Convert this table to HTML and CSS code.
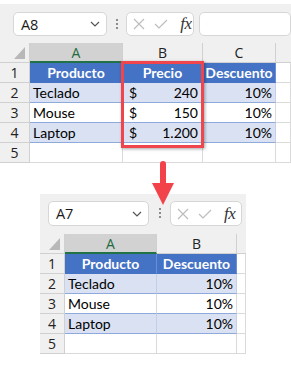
FILE: index.html
```html
<!DOCTYPE html>
<html lang="es">
<head>
<meta charset="utf-8">
<link rel="stylesheet" href="styles.css">
</head>
<body>
<div class="page">
  <section class="shot shot1">
    <div class="toolbar">
      <div class="namebox"><span class="ref">A8</span>
        <svg class="chev" width="10" height="6" viewBox="0 0 10 6"><path d="M1 1 L5 5 L9 1" fill="none" stroke="#555" stroke-width="1.2"/></svg>
      </div>
      <div class="dots"><i></i><i></i><i></i></div>
      <div class="fxbox">
        <svg class="ico" width="12" height="12" viewBox="0 0 12 12"><path d="M1 1 L11 11 M11 1 L1 11" stroke="#bdbdbd" stroke-width="1.2" fill="none"/></svg>
        <svg class="ico" width="14" height="12" viewBox="0 0 14 12"><path d="M1 6 L5 10 L13 2" stroke="#bdbdbd" stroke-width="1.2" fill="none"/></svg>
        <span class="fx">fx</span>
      </div>
      <div class="formula"></div>
    </div>
    <div class="sheet sheet1">
      <div class="corner"><span class="tri"></span></div>
      <div class="colh sel">A</div>
      <div class="colh">B</div>
      <div class="colh">C</div>
      <div class="colh last"></div>

      <div class="rowh">1</div>
      <div class="c th">Producto</div>
      <div class="c th">Precio</div>
      <div class="c th">Descuento</div>
      <div class="c"></div>

      <div class="rowh">2</div>
      <div class="c band">Teclado</div>
      <div class="c band money"><span>$</span><span>240</span></div>
      <div class="c band num">10%</div>
      <div class="c"></div>

      <div class="rowh">3</div>
      <div class="c plain">Mouse</div>
      <div class="c plain money"><span>$</span><span>150</span></div>
      <div class="c plain num">10%</div>
      <div class="c"></div>

      <div class="rowh">4</div>
      <div class="c band">Laptop</div>
      <div class="c band money"><span>$</span><span>1.200</span></div>
      <div class="c band num">10%</div>
      <div class="c"></div>

      <div class="rowh">5</div>
      <div class="c"></div>
      <div class="c"></div>
      <div class="c"></div>
      <div class="c"></div>
    </div>
    <div class="highlight"></div>
  </section>

  <svg class="arrow" width="22" height="45" viewBox="0 0 22 45">
    <rect x="8" y="0" width="6" height="25" rx="3" fill="#f2434b"/>
    <path d="M0 22 L22 22 L11 44 Z" fill="#f2434b"/>
  </svg>

  <section class="shot shot2">
    <div class="toolbar">
      <div class="namebox"><span class="ref">A7</span>
        <svg class="chev" width="10" height="6" viewBox="0 0 10 6"><path d="M1 1 L5 5 L9 1" fill="none" stroke="#555" stroke-width="1.2"/></svg>
      </div>
      <div class="dots"><i></i><i></i><i></i></div>
      <div class="fxbox">
        <svg class="ico" width="12" height="12" viewBox="0 0 12 12"><path d="M1 1 L11 11 M11 1 L1 11" stroke="#bdbdbd" stroke-width="1.2" fill="none"/></svg>
        <svg class="ico" width="14" height="12" viewBox="0 0 14 12"><path d="M1 6 L5 10 L13 2" stroke="#bdbdbd" stroke-width="1.2" fill="none"/></svg>
        <span class="fx">fx</span>
      </div>
    </div>
    <div class="sheet sheet2">
      <div class="corner"><span class="tri"></span></div>
      <div class="colh sel">A</div>
      <div class="colh">B</div>
      <div class="colh last"></div>

      <div class="rowh">1</div>
      <div class="c th">Producto</div>
      <div class="c th">Descuento</div>
      <div class="c"></div>

      <div class="rowh">2</div>
      <div class="c band">Teclado</div>
      <div class="c band num">10%</div>
      <div class="c"></div>

      <div class="rowh">3</div>
      <div class="c plain">Mouse</div>
      <div class="c plain num">10%</div>
      <div class="c"></div>

      <div class="rowh">4</div>
      <div class="c band">Laptop</div>
      <div class="c band num">10%</div>
      <div class="c"></div>

      <div class="rowh">5</div>
      <div class="c"></div>
      <div class="c"></div>
      <div class="c"></div>
    </div>
  </section>
</div>
</body>
</html>
```
FILE: styles.css
```css
* { box-sizing: border-box; }
html, body { margin: 0; padding: 0; background: #fff; }
body { width: 291px; height: 369px; overflow: hidden; font-family: "Open Sans", "Noto Sans", sans-serif; }

.page { position: relative; padding-top: 4px; }

.shot { position: relative; overflow: hidden; }
.shot1 { width: 291px; }
.shot2 { width: 206px; margin-left: 40px; margin-top: 31px; }

.toolbar {
  background: #f0f0f0;
  height: 39px;
  display: flex;
  align-items: flex-start;
  padding-top: 8px;
}
.shot2 .toolbar { height: 40px; padding-top: 7px; }

.namebox {
  width: 101px;
  height: 24px;
  margin-left: 13px;
  background: #fff;
  border: 1px solid #d6d6d6;
  border-radius: 5px;
  display: flex;
  align-items: center;
  justify-content: space-between;
  padding: 0 6px 0 7px;
}
.shot2 .namebox { margin-left: 8px; height: 25px; }
.ref { font-size: 14.5px; color: #1a1a1a; letter-spacing: -0.2px; }
.chev { display: block; }

.dots {
  width: 21px;
  height: 24px;
  display: flex;
  flex-direction: column;
  align-items: center;
  justify-content: center;
  gap: 2px;
}
.dots i { display: block; width: 2px; height: 2px; background: #8c8c8c; }

.fxbox {
  width: 73px;
  height: 24px;
  background: #fff;
  border: 1px solid #d6d6d6;
  border-radius: 5px;
  display: flex;
  align-items: center;
  padding-left: 6px;
  gap: 9px;
}
.shot2 .fxbox { width: 72px; height: 25px; }
.ico { display: block; }
.fx {
  font-family: "Liberation Serif", serif;
  font-style: italic;
  font-size: 17px;
  color: #333;
  margin-left: 3px;
  letter-spacing: -0.5px;
}
.formula {
  margin-left: 5px;
  width: 100px;
  height: 24px;
  background: #fff;
  border: 1px solid #d6d6d6;
  border-radius: 5px;
}

.sheet { display: grid; grid-auto-rows: 20px; }
.sheet1 { grid-template-columns: 30px 93px 80px 73px 15px; }
.sheet2 { grid-template-columns: 25px 92px 80px 9px; grid-template-rows: 20px repeat(5, 20px) 4px; }

.corner, .colh, .rowh {
  background: #f0f0f0;
  border-right: 1px solid #d0d0d0;
  border-bottom: 1px solid #d0d0d0;
  color: #222;
  font-size: 14px;
}
.corner { position: relative; }
.tri {
  position: absolute;
  right: 4px;
  bottom: 3px;
  width: 0; height: 0;
  border-left: 11px solid transparent;
  border-bottom: 12px solid #b8b8b8;
}
.colh { display: flex; align-items: center; justify-content: center; line-height: 1; padding-top: 1px; }
.colh.sel { background: #d2d2d2; color: #1e6b40; border-bottom: 2px solid #217346; }
.colh.last { border-right: none; }
.rowh { display: flex; align-items: center; justify-content: center; font-size: 14px; color: #222; }

.c {
  border-right: 1px solid #dadada;
  border-bottom: 1px solid #dadada;
  font-family: "Lato", "Open Sans", sans-serif;
  font-size: 14px;
  color: #000;
  display: flex;
  align-items: center;
  padding: 0 3px;
  white-space: nowrap;
}
.c.th {
  background: #4472c4;
  color: #fff;
  font-weight: bold;
  justify-content: center;
  border-right: 1px solid #6a8fd6;
  border-bottom: 1px solid #4472c4;
}
.c.band { background: #d9e1f2; border-bottom: 1px solid #8ea9db; border-right: 1px solid #c4d0ea; }
.c.plain { background: #fff; border-bottom: 1px solid #8ea9db; border-right: 1px solid #dadada; }
.c.num { justify-content: flex-end; }
.c.money { justify-content: space-between; padding: 0 4px 0 6px; }

.highlight {
  position: absolute;
  left: 121px;
  top: 57px;
  width: 83px;
  height: 87px;
  border: 3px solid #f0454c;
  box-shadow: 1px 1px 3px rgba(0,0,0,0.35);
}

.arrow {
  position: absolute;
  left: 152px;
  top: 161px;
  z-index: 2;
}
```
